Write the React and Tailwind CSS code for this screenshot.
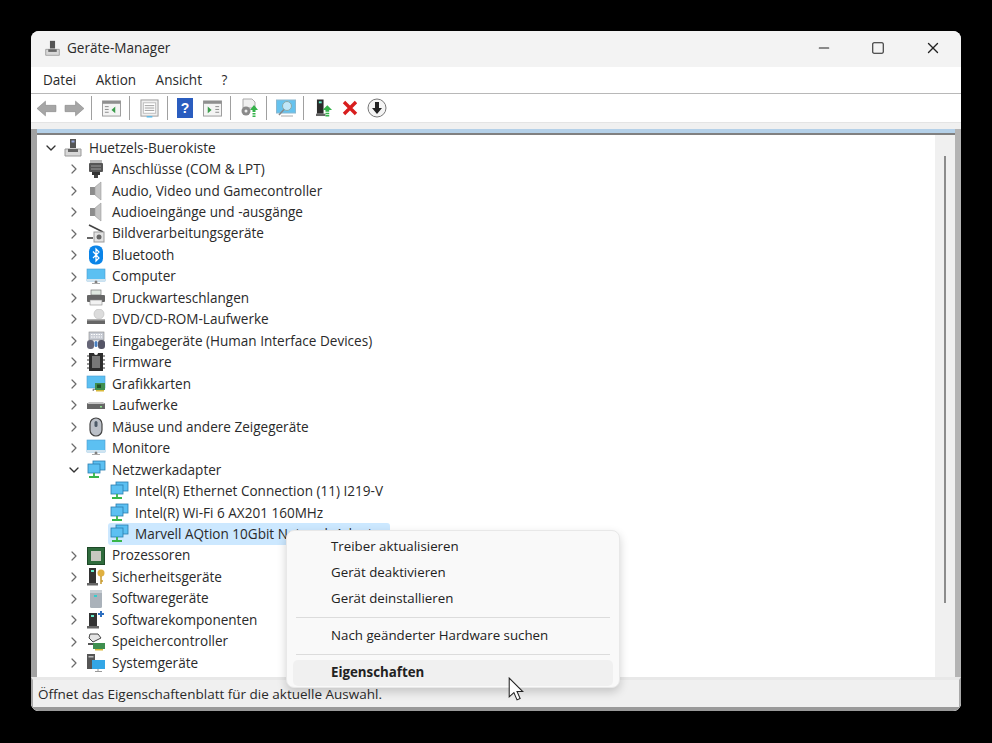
import { ChevronDown, ChevronRight, Minus, Square, X } from 'lucide-react';

const font = { fontFamily: '"Open Sans", "Noto Sans", sans-serif' };

// Small hand drawn device icons, all on a 20x20 box
function DeviceIcon({ kind }) {
  const parts = {
    root: (
      <>
        <rect x="7" y="1" width="6" height="9" fill="#555" />
        <rect x="8.5" y="2.5" width="3" height="2" fill="#9ad" />
        <path d="M2 11h16v7H2z" fill="#d8d8d8" stroke="#999" />
        <rect x="5" y="11" width="10" height="3" fill="#666" />
      </>
    ),
    port: (
      <>
        <rect x="4" y="1" width="12" height="3" fill="#bbb" />
        <rect x="3" y="4" width="14" height="9" rx="1" fill="#555" />
        <path d="M5 7h10M5 10h10" stroke="#999" />
        <rect x="6" y="13" width="8" height="3" fill="#333" />
        <rect x="8" y="16" width="4" height="3" fill="#444" />
      </>
    ),
    audio: (
      <>
        <rect x="4" y="6" width="5" height="8" fill="#8c8c8c" />
        <path d="M9 6l6-5v18l-6-5z" fill="#c4c4c4" stroke="#9a9a9a" strokeWidth="0.6" />
      </>
    ),
    camera: (
      <>
        <path d="M3 1l14 7" stroke="#444" strokeWidth="1.6" />
        <rect x="8" y="8" width="10" height="10" fill="#e2e2e2" stroke="#999" />
        <circle cx="13" cy="13" r="2.5" fill="#666" />
        <path d="M1 13h6v2H1z" fill="#666" />
      </>
    ),
    bluetooth: (
      <>
        <rect x="3" y="0.5" width="14" height="19" rx="6" fill="#0a84e8" />
        <path d="M7 6.500l6 6.500-3 3V4l3 3-6 6" fill="none" stroke="#fff" strokeWidth="1.2" />
      </>
    ),
    monitor: (
      <>
        <rect x="1" y="2" width="18" height="12" fill="#5cc0f2" stroke="#4a9cd0" strokeWidth="0.6" />
        <rect x="1" y="12" width="18" height="2" fill="#d0e4f0" />
        <path d="M9 14h2v2H9zM6 16.500h8" stroke="#aaa" />
      </>
    ),
    printer: (
      <>
        <rect x="5" y="2" width="10" height="5" fill="#dfe8e0" stroke="#777" strokeWidth="0.7" />
        <rect x="1" y="7" width="18" height="7" rx="1" fill="#666" />
        <rect x="4" y="12" width="12" height="5" fill="#f2f2f2" stroke="#888" strokeWidth="0.6" />
      </>
    ),
    dvd: (
      <>
        <circle cx="13" cy="5" r="5" fill="#dcdcdc" stroke="#bbb" strokeWidth="0.6" />
        <rect x="1" y="10" width="18" height="5" fill="#666" />
        <rect x="1" y="10" width="18" height="1.500" fill="#b0b0b0" />
      </>
    ),
    input: (
      <>
        <rect x="3" y="1" width="15" height="8" fill="#c8ccd4" stroke="#888" strokeWidth="0.6" />
        <path d="M5 3.500h11M5 6h11" stroke="#fff" strokeDasharray="1.5 1" />
        <rect x="1" y="9" width="7" height="9" rx="3" fill="#667" />
        <rect x="12" y="9" width="7" height="9" rx="3" fill="#556" />
        <rect x="8.500" y="10" width="3" height="6" rx="1.500" fill="#4a7fc0" />
      </>
    ),
    firmware: (
      <>
        <path d="M3 1h5a2 2 0 0 0 4 0h5v18H3z" fill="#2d2d2d" />
        <rect x="6" y="4" width="8" height="12" fill="#777" />
        <path d="M1 4h2M1 8h2M1 12h2M1 16h2M17 4h2M17 8h2M17 12h2M17 16h2" stroke="#333" />
      </>
    ),
    gpu: (
      <>
        <rect x="1" y="2" width="18" height="12" fill="#5cc0f2" stroke="#4a9cd0" strokeWidth="0.6" />
        <path d="M7 17L7 15h2" stroke="#aaa" />
        <rect x="9" y="9" width="10" height="7" fill="#3f8f4f" />
        <rect x="11" y="10.500" width="4" height="3.500" fill="#20502a" />
        <rect x="10" y="16" width="8" height="1.500" fill="#d9b93a" />
      </>
    ),
    drive: (
      <>
        <rect x="1" y="8" width="18" height="6" fill="#666" />
        <path d="M3 7h14l2 2H1z" fill="#c4c4c4" />
        <rect x="14" y="11" width="2" height="1.500" fill="#8d8" />
      </>
    ),
    mouse: (
      <>
        <rect x="4" y="1" width="12" height="18" rx="6" fill="#bbc0c8" stroke="#444" strokeWidth="1.2" />
        <rect x="8.500" y="4" width="3" height="6" rx="1.500" fill="#4d5a68" />
      </>
    ),
    network: (
      <>
        <rect x="7" y="1" width="12" height="9" fill="#5cc0f2" stroke="#2a7db0" strokeWidth="0.8" />
        <rect x="2" y="4" width="12" height="9" fill="#5cc0f2" stroke="#2a7db0" strokeWidth="0.8" />
        <path d="M8 13v3M3 17h10" stroke="#38b54a" strokeWidth="1.8" />
      </>
    ),
    cpu: (
      <>
        <rect x="1.500" y="1.500" width="17" height="17" fill="#2f6b3c" stroke="#1d4827" />
        <rect x="5" y="5" width="10" height="10" fill="#c8c8c0" />
      </>
    ),
    security: (
      <>
        <rect x="3" y="1" width="7" height="15" fill="#333" />
        <rect x="5" y="3" width="3" height="2" fill="#6ec" />
        <rect x="1" y="16" width="11" height="2.500" fill="#666" />
        <circle cx="15" cy="6" r="3.500" fill="#e0b040" />
        <path d="M15 9v8M15 14h2" stroke="#c89a2c" strokeWidth="1.500" />
      </>
    ),
    software: (
      <>
        <rect x="4" y="1" width="12" height="18" rx="1.500" fill="#aab2ba" />
        <rect x="4" y="1" width="12" height="3" fill="#c8ced4" />
        <rect x="8" y="6" width="3" height="2" fill="#3cc" />
      </>
    ),
    component: (
      <>
        <rect x="3" y="3" width="8" height="13" fill="#333" />
        <rect x="5" y="5" width="3" height="2" fill="#6ec" />
        <rect x="1" y="16" width="12" height="2.500" fill="#666" />
        <path d="M14 1h2v2h2v2h-2v2h-2V5h-2V3h2z" fill="#2d6fc0" />
      </>
    ),
    storage: (
      <>
        <path d="M4 2h8l3 4-8 4-4-4z" fill="#e4e4e4" stroke="#444" />
        <path d="M2 11h5v2H2z" fill="#555" />
        <rect x="7" y="11" width="12" height="6" fill="#3f8f4f" />
        <rect x="9" y="17" width="8" height="1.500" fill="#d9b93a" />
      </>
    ),
    system: (
      <>
        <rect x="1" y="1" width="8" height="15" fill="#555" />
        <rect x="2.500" y="3" width="5" height="1.500" fill="#bbb" />
        <rect x="6" y="7" width="13" height="9" fill="#33a6e6" />
        <path d="M12 16v2M9 18.500h7" stroke="#999" />
      </>
    ),
  };
  return (
    <svg viewBox="0 0 20 20" className="w-5 h-5 shrink-0">
      {parts[kind]}
    </svg>
  );
}

function TreeRow({ label, icon, open, hasArrow = true, level = 1, selected }) {
  return (
    <div className="flex h-[21.48px] items-center">
      <div
        className={
          level === 0 ? 'w-[1px] shrink-0' : level === 1 ? 'w-[24px] shrink-0' : 'w-[47px] shrink-0'
        }
      />
      <div className="w-[24px] flex justify-center shrink-0 text-[#6b6b6b]">
        {hasArrow &&
          (open ? (
            <ChevronDown size={16} strokeWidth={2} className="text-[#333]" />
          ) : (
            <ChevronRight size={16} strokeWidth={1.8} />
          ))}
      </div>
      <div
        className={`flex items-center h-[21.48px] ${
          selected ? 'bg-[#cce8ff] rounded-[3px] w-[282px] -ml-[1px] pl-[1px]' : ''
        }`}
      >
        <DeviceIcon kind={icon} />
        <span className="ml-[6px] whitespace-nowrap">{label}</span>
      </div>
    </div>
  );
}

const rows = [
  { label: 'Huetzels-Buerokiste', icon: 'root', open: true, level: 0 },
  { label: 'Anschlüsse (COM & LPT)', icon: 'port' },
  { label: 'Audio, Video und Gamecontroller', icon: 'audio' },
  { label: 'Audioeingänge und -ausgänge', icon: 'audio' },
  { label: 'Bildverarbeitungsgeräte', icon: 'camera' },
  { label: 'Bluetooth', icon: 'bluetooth' },
  { label: 'Computer', icon: 'monitor' },
  { label: 'Druckwarteschlangen', icon: 'printer' },
  { label: 'DVD/CD-ROM-Laufwerke', icon: 'dvd' },
  { label: 'Eingabegeräte (Human Interface Devices)', icon: 'input' },
  { label: 'Firmware', icon: 'firmware' },
  { label: 'Grafikkarten', icon: 'gpu' },
  { label: 'Laufwerke', icon: 'drive' },
  { label: 'Mäuse und andere Zeigegeräte', icon: 'mouse' },
  { label: 'Monitore', icon: 'monitor' },
  { label: 'Netzwerkadapter', icon: 'network', open: true },
  { label: 'Intel(R) Ethernet Connection (11) I219-V', icon: 'network', level: 2, hasArrow: false },
  { label: 'Intel(R) Wi-Fi 6 AX201 160MHz', icon: 'network', level: 2, hasArrow: false },
  { label: 'Marvell AQtion 10Gbit Network Adapter', icon: 'network', level: 2, hasArrow: false, selected: true },
  { label: 'Prozessoren', icon: 'cpu' },
  { label: 'Sicherheitsgeräte', icon: 'security' },
  { label: 'Softwaregeräte', icon: 'software' },
  { label: 'Softwarekomponenten', icon: 'component' },
  { label: 'Speichercontroller', icon: 'storage' },
  { label: 'Systemgeräte', icon: 'system' },
];

function Sep({ className }) {
  return <div className={`w-px h-[24px] bg-[#a0a0a0] shrink-0 ${className}`} />;
}

function Toolbar() {
  return (
    <div className="flex items-center h-[28px] bg-white pl-[5px] shrink-0">
      <svg viewBox="0 0 20 16" className="w-[21px] h-[17px] shrink-0">
        <path d="M1 8l8-7v4h10v6H9v4z" fill="#a6a6a6" stroke="#8a8a8a" strokeWidth="0.6" />
      </svg>
      <svg viewBox="0 0 20 16" className="w-[21px] h-[17px] shrink-0 ml-[7px]">
        <path d="M19 8l-8-7v4H1v6h10v4z" fill="#a6a6a6" stroke="#8a8a8a" strokeWidth="0.6" />
      </svg>
      <Sep className="ml-[6px]" />
      <svg viewBox="0 0 20 18" className="w-[19px] h-[17px] shrink-0 ml-[10px]">
        <rect x="0.500" y="1" width="19" height="16" fill="#f4f4f4" stroke="#999" />
        <rect x="0.500" y="1" width="19" height="3" fill="#8f8f8f" />
        <path d="M3 7h4M3 10h4M3 13h4" stroke="#888" />
        <path d="M14 7v7l-4-3.500z" fill="#3a9c4a" />
      </svg>
      <Sep className="ml-[8px]" />
      <svg viewBox="0 0 20 20" className="w-[19px] h-[19px] shrink-0 ml-[10px]">
        <rect x="1" y="1" width="18" height="17" fill="#f0f0f0" stroke="#999" />
        <rect x="3.500" y="4" width="13" height="11" fill="#fff" stroke="#bbb" />
        <path d="M5 7h10M5 9.500h10M5 12h10" stroke="#999" />
        <rect x="7" y="18" width="6" height="1.500" fill="#58b8e8" />
      </svg>
      <Sep className="ml-[8px]" />
      <svg viewBox="0 0 16 20" className="w-[16px] h-[20px] shrink-0 ml-[9px]">
        <rect width="16" height="20" fill="#2a5dbf" />
        <text x="8" y="15" textAnchor="middle" fontSize="14" fontWeight="700" fill="#fff" fontFamily="Liberation Sans">?</text>
      </svg>
      <svg viewBox="0 0 20 18" className="w-[19px] h-[17px] shrink-0 ml-[10px]">
        <rect x="0.500" y="1" width="19" height="16" fill="#f4f4f4" stroke="#999" />
        <rect x="0.500" y="1" width="19" height="3" fill="#8f8f8f" />
        <path d="M13 7h4M13 10h4M13 13h4" stroke="#888" />
        <path d="M5 7v7l4-3.500z" fill="#3a9c4a" />
      </svg>
      <Sep className="ml-[8px]" />
      <svg viewBox="0 0 20 20" className="w-[20px] h-[20px] shrink-0 ml-[8px]">
        <path d="M4 1h9l3 3v6H4z" fill="#f0f0f0" stroke="#aaa" />
        <circle cx="7" cy="13" r="4.500" fill="#8a8a8a" />
        <circle cx="7" cy="13" r="1.500" fill="#eee" />
        <path d="M15 7l4 5h-2.500v2h-3v-2H11z" fill="#35b34a" />
        <path d="M13.500 15h3v1.500h-3zM13.500 17.500h3V19h-3z" fill="#35b34a" />
      </svg>
      <Sep className="ml-[7px]" />
      <svg viewBox="0 0 20 20" className="w-[20px] h-[20px] shrink-0 ml-[9px]">
        <rect x="0.500" y="2" width="19" height="13" fill="#66c2ee" stroke="#8ab8d0" />
        <circle cx="11" cy="8" r="4.500" fill="#bfe6f8" stroke="#8aa" />
        <path d="M8 11.500L3 17" stroke="#888" strokeWidth="1.500" />
        <path d="M5 18h12" stroke="#aaa" />
      </svg>
      <Sep className="ml-[7px]" />
      <svg viewBox="0 0 18 20" className="w-[17px] h-[20px] shrink-0 ml-[12px]">
        <rect x="1" y="1" width="7" height="15" fill="#2b2b2b" />
        <rect x="3" y="3" width="3" height="2" fill="#6ec" />
        <rect x="0" y="16" width="10" height="2.500" fill="#666" />
        <path d="M12 7l5 5h-3v2h-4v-2H7z" fill="#35b34a" />
        <path d="M10 15h4v1.500h-4zM10 17.500h4V19h-4z" fill="#35b34a" />
      </svg>
      <svg viewBox="0 0 16 16" className="w-[16px] h-[16px] shrink-0 ml-[9px]">
        <path d="M2 2l12 12M14 2L2 14" stroke="#d81e1e" strokeWidth="3.400" />
      </svg>
      <svg viewBox="0 0 20 20" className="w-[20px] h-[20px] shrink-0 ml-[9px]">
        <circle cx="10" cy="10" r="9" fill="#f4f4f4" stroke="#777" />
        <path d="M8 4h4v6h3l-5 6-5-6h3z" fill="#222" />
      </svg>
    </div>
  );
}

function ContextMenu() {
  return (
    <div className="absolute left-[255px] top-[499px] w-[334px] h-[158px] bg-[#f9f9f9] rounded-[8px] border border-[#e8e8e8] shadow-[0_4px_10px_rgba(0,0,0,0.18)] px-[6px] pt-[3px] text-[13.3px] text-[#222]">
      <div className="h-[26px] flex items-center pl-[38px]">Treiber aktualisieren</div>
      <div className="h-[26px] flex items-center pl-[38px]">Gerät deaktivieren</div>
      <div className="h-[26px] flex items-center pl-[38px]">Gerät deinstallieren</div>
      <div className="h-px bg-[#dcdcdc] mt-[5px] mx-[3px]" />
      <div className="h-[35px] flex items-center pl-[38px]">Nach geänderter Hardware suchen</div>
      <div className="h-px bg-[#dcdcdc] mt-[1px] mx-[3px]" />
      <div className="h-[26px] flex items-center pl-[38px] bg-[#f0f0f0] rounded-[5px] font-bold mt-[5px]">
        Eigenschaften
      </div>
    </div>
  );
}

export default function App() {
  return (
    <div className="min-h-[743px] bg-black pt-[31px] pl-[31px]" style={font}>
      <div className="relative w-[930px] h-[680px] rounded-[8px] overflow-hidden bg-[#f0f0f0] flex flex-col text-[#2a2a2a] text-[13.55px]">
        {/* Title bar */}
        <div className="flex items-center h-[36px] bg-[#f3f3f3] shrink-0 pb-[2px]">
          <div className="ml-[13px]">
            <svg viewBox="0 0 20 20" className="w-[17px] h-[17px]">
              <rect x="7" y="1" width="6" height="9" fill="#555" />
              <path d="M2 11h16v7H2z" fill="#d8d8d8" stroke="#999" />
              <rect x="5" y="11" width="10" height="3" fill="#666" />
            </svg>
          </div>
          <span className="ml-[6px]">Geräte-Manager</span>
          <div className="ml-auto flex items-center text-[#222]">
            <Minus size={16} strokeWidth={1.8} className="mr-[39px]" />
            <Square size={14} strokeWidth={1.8} className="mr-[39px]" />
            <X size={18} strokeWidth={1.8} className="mr-[19px]" />
          </div>
        </div>

        {/* Menu */}
        <div className="flex items-center h-[26px] bg-white border-b border-[#b8b8b8] pl-[12px] gap-[19.500px] shrink-0 box-content">
          <span>Datei</span>
          <span>Aktion</span>
          <span>Ansicht</span>
          <span>?</span>
        </div>

        <Toolbar />
        <div className="h-[7px] bg-[#f0f0f0] border-t border-[#e4e4e4] shrink-0" />

        {/* Tree and scrollbar, framed by the grey side bands */}
        <div className="flex flex-1 min-h-0">
          <div className="w-[6px] shrink-0 bg-[#a2a2a2]" />
          <div className="flex flex-col flex-1 min-w-0">
            <div className="h-[4px] bg-[#b4d0e8] shrink-0" />
            <div className="flex flex-1 min-h-0 border-t-[2px] border-[#808080] bg-white">
              <div className="flex-1 bg-white pl-[1px] pt-[2px] overflow-hidden">
                {rows.map((row) => (
                  <TreeRow key={row.label} {...row} />
                ))}
              </div>
              <div className="w-[20px] shrink-0 bg-[#f0f0f0] pt-[21px] flex justify-center">
                <div className="w-[2px] h-[447px] bg-[#8c8c8c]" />
              </div>
            </div>
          </div>
          <div className="w-[6px] shrink-0 bg-[#b4b4b4]" />
        </div>

        {/* Status bar */}
        <div className="h-[34px] bg-[#f0f0f0] border-t-[3px] border-t-[#e8e8e8] border-b-[4px] border-b-[#9a9a9a] border-x-[2px] border-x-[#a8a8a8] pl-[5px] pt-[2px] flex items-center text-[13.5px] shrink-0">
          Öffnet das Eigenschaftenblatt für die aktuelle Auswahl.
        </div>

        <ContextMenu />

        {/* Mouse pointer */}
        <svg viewBox="0 0 16 24" className="absolute left-[477px] top-[646px] w-[17px] h-[25px]">
          <path d="M1 1v18l4.500-4 3 7 3-1.300-3-6.700H14z" fill="#fff" stroke="#222" strokeWidth="1" />
        </svg>
      </div>
    </div>
  );
}
